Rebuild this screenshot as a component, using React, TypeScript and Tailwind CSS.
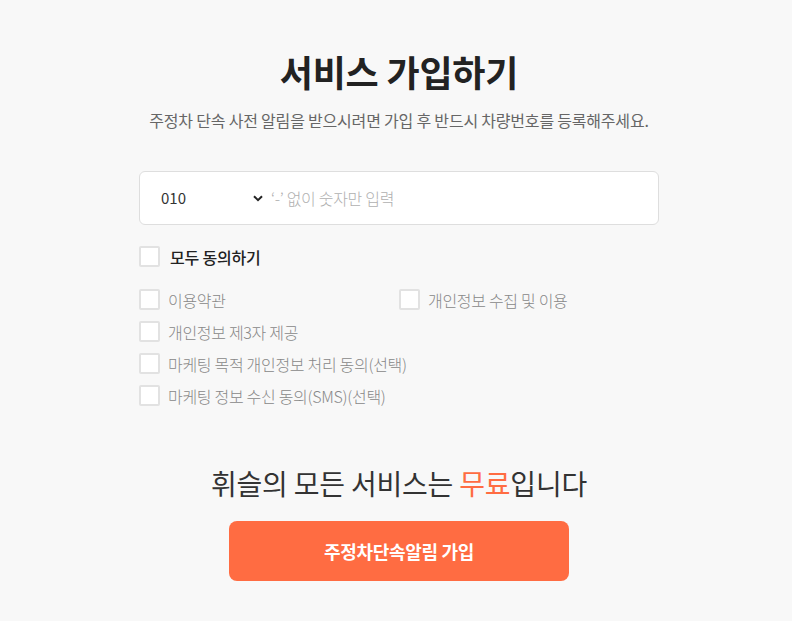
import React from "react";

function Box() {
  return <span className="w-[21px] h-[21px] shrink-0 rounded-[2px] border-2 border-[#e2e2e2] bg-white" />;
}

function Item({ label }: { label: string }) {
  return (
    <label className="flex items-center gap-[8px] h-[21px] text-[16px] font-light text-[#888] tracking-[-0.3px]">
      <Box />
      <span>{label}</span>
    </label>
  );
}

export default function App() {
  return (
    <div
      className="min-h-[621px] w-full bg-[#f8f8f8] flex flex-col items-center pl-[6px]"
      style={{ fontFamily: '"Noto Sans CJK KR", "Noto Sans", sans-serif' }}
    >
      <h1 className="mt-[46px] text-[36px] leading-[50px] font-bold text-[#222] tracking-[-0.2px]">서비스 가입하기</h1>
      <p className="mt-[13px] text-[16px] leading-[22px] text-[#666] tracking-[-0.2px]">
        주정차 단속 사전 알림을 받으시려면 가입 후 반드시 차량번호를 등록해주세요.
      </p>
      <div className="mt-[40px] w-[520px] h-[54px] bg-white border border-[#dedede] rounded-[6px] flex items-center">
        <div className="w-[131px] pl-[21px] pr-[10px] flex items-center justify-between">
          <span className="text-[15px] text-[#333]">010</span>
          <svg width="10" height="7" viewBox="0 0 10 7" className="mr-[-2px]">
            <path d="M1 1.2 L5 5.2 L9 1.2" stroke="#222" strokeWidth="2" fill="none" />
          </svg>
        </div>
        <span className="text-[16px] font-light text-[#b0b0b0] tracking-[-0.3px]">‘-’ 없이 숫자만 입력</span>
      </div>
      <div className="w-[520px] mt-[21px]">
        <label className="flex items-center gap-[10px] h-[21px] text-[16px] font-medium text-[#222] tracking-[-0.2px]">
          <Box />
          <span>모두 동의하기</span>
        </label>
        <div className="mt-[22px] flex flex-col gap-[11px]">
          <div className="flex">
            <div className="w-[260px]"><Item label="이용약관" /></div>
            <Item label="개인정보 수집 및 이용" />
          </div>
          <Item label="개인정보 제3자 제공" />
          <Item label="마케팅 목적 개인정보 처리 동의(선택)" />
          <Item label="마케팅 정보 수신 동의(SMS)(선택)" />
        </div>
      </div>
      <p className="mt-[58px] text-[28px] leading-[39px] text-[#333] tracking-[-0.2px]">
        휘슬의 모든 서비스는 <span className="text-[#ff6c42]">무료</span>입니다
      </p>
      <button className="mt-[18px] w-[340px] h-[60px] rounded-[8px] bg-[#ff6c42] text-white text-[18px] font-bold tracking-[-0.3px]">
        주정차단속알림 가입
      </button>
    </div>
  );
}
